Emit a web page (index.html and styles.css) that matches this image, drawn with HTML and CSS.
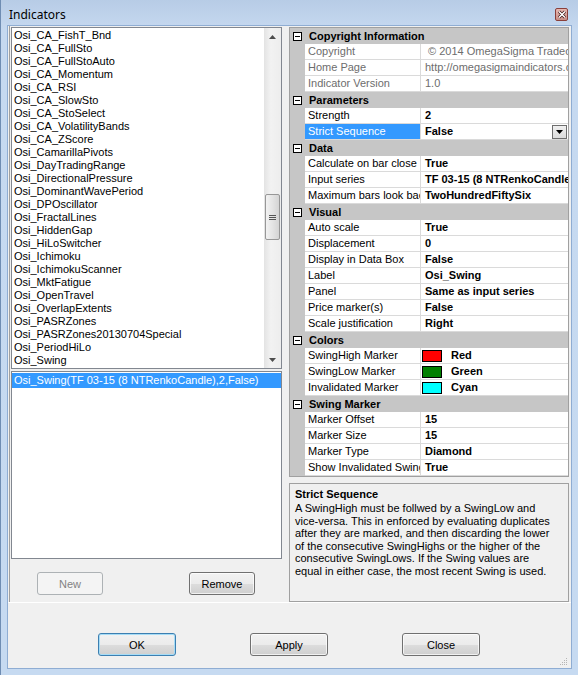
FILE: index.html
```html
<!DOCTYPE html>
<html>
<head>
<meta charset="utf-8">
<link rel="stylesheet" href="styles.css">
</head>
<body>
<div class="window">
  <div class="titlebar">
    <span class="title">Indicators</span>
    <span class="close-btn"><svg width="10" height="9" viewBox="0 0 10 9"><path d="M2 1.5 L8 7.5 M8 1.5 L2 7.5" stroke="#3a1010" stroke-width="3"/><path d="M2 1.5 L8 7.5 M8 1.5 L2 7.5" stroke="#fff" stroke-width="1.6"/></svg></span>
  </div>
  <div class="client">
    <div class="main">
      <div class="left">
        <div class="list list-avail">
          <div class="items">
            <div class="item">Osi_CA_FishT_Bnd</div>
            <div class="item">Osi_CA_FullSto</div>
            <div class="item">Osi_CA_FullStoAuto</div>
            <div class="item">Osi_CA_Momentum</div>
            <div class="item">Osi_CA_RSI</div>
            <div class="item">Osi_CA_SlowSto</div>
            <div class="item">Osi_CA_StoSelect</div>
            <div class="item">Osi_CA_VolatilityBands</div>
            <div class="item">Osi_CA_ZScore</div>
            <div class="item">Osi_CamarillaPivots</div>
            <div class="item">Osi_DayTradingRange</div>
            <div class="item">Osi_DirectionalPressure</div>
            <div class="item">Osi_DominantWavePeriod</div>
            <div class="item">Osi_DPOscillator</div>
            <div class="item">Osi_FractalLines</div>
            <div class="item">Osi_HiddenGap</div>
            <div class="item">Osi_HiLoSwitcher</div>
            <div class="item">Osi_Ichimoku</div>
            <div class="item">Osi_IchimokuScanner</div>
            <div class="item">Osi_MktFatigue</div>
            <div class="item">Osi_OpenTravel</div>
            <div class="item">Osi_OverlapExtents</div>
            <div class="item">Osi_PASRZones</div>
            <div class="item">Osi_PASRZones20130704Special</div>
            <div class="item">Osi_PeriodHiLo</div>
            <div class="item">Osi_Swing</div>
          </div>
          <div class="vscroll">
            <div class="sb-arrow"><svg width="7" height="4" viewBox="0 0 7 4"><path d="M0 4 L3.5 0 L7 4 Z" fill="#4d4d4d"/></svg></div>
            <div class="sb-track">
              <div class="sb-thumb"><svg width="7" height="7" viewBox="0 0 7 7"><path d="M0 1.5 H7 M0 3.5 H7 M0 5.5 H7" stroke="#555" stroke-width="1"/></svg></div>
            </div>
            <div class="sb-arrow"><svg width="7" height="4" viewBox="0 0 7 4"><path d="M0 0 L3.5 4 L7 0 Z" fill="#4d4d4d"/></svg></div>
          </div>
        </div>
        <div class="list list-sel">
          <div class="sel-item">Osi_Swing(TF 03-15 (8 NTRenkoCandle),2,False)</div>
        </div>
        <div class="left-buttons">
          <button class="btn btn-disabled">New</button>
          <button class="btn">Remove</button>
        </div>
      </div>
      <div class="right">
        <div class="grid">
          <div class="cat"><span class="minus"></span><span class="cat-label">Copyright Information</span></div>
          <div class="row ro"><span class="gut"></span><span class="name">Copyright</span><span class="val">&nbsp;© 2014 OmegaSigma Tradecraft</span></div>
          <div class="row ro"><span class="gut"></span><span class="name">Home Page</span><span class="val">http://omegasigmaindicators.com</span></div>
          <div class="row ro"><span class="gut"></span><span class="name">Indicator Version</span><span class="val">1.0</span></div>
          <div class="cat"><span class="minus"></span><span class="cat-label">Parameters</span></div>
          <div class="row"><span class="gut"></span><span class="name">Strength</span><span class="val">2</span></div>
          <div class="row"><span class="gut"></span><span class="name selected">Strict Sequence</span><span class="val">False<span class="dd"><svg width="7" height="4" viewBox="0 0 7 4"><path d="M0 0 L3.5 4 L7 0 Z" fill="#000"/></svg></span></span></div>
          <div class="cat"><span class="minus"></span><span class="cat-label">Data</span></div>
          <div class="row"><span class="gut"></span><span class="name">Calculate on bar close</span><span class="val">True</span></div>
          <div class="row"><span class="gut"></span><span class="name">Input series</span><span class="val">TF 03-15 (8 NTRenkoCandle)</span></div>
          <div class="row"><span class="gut"></span><span class="name">Maximum bars look back</span><span class="val">TwoHundredFiftySix</span></div>
          <div class="cat"><span class="minus"></span><span class="cat-label">Visual</span></div>
          <div class="row"><span class="gut"></span><span class="name">Auto scale</span><span class="val">True</span></div>
          <div class="row"><span class="gut"></span><span class="name">Displacement</span><span class="val">0</span></div>
          <div class="row"><span class="gut"></span><span class="name">Display in Data Box</span><span class="val">False</span></div>
          <div class="row"><span class="gut"></span><span class="name">Label</span><span class="val">Osi_Swing</span></div>
          <div class="row"><span class="gut"></span><span class="name">Panel</span><span class="val">Same as input series</span></div>
          <div class="row"><span class="gut"></span><span class="name">Price marker(s)</span><span class="val">False</span></div>
          <div class="row"><span class="gut"></span><span class="name">Scale justification</span><span class="val">Right</span></div>
          <div class="cat"><span class="minus"></span><span class="cat-label">Colors</span></div>
          <div class="row"><span class="gut"></span><span class="name">SwingHigh Marker</span><span class="val val-color"><span class="swatch sw-red"></span>Red</span></div>
          <div class="row"><span class="gut"></span><span class="name">SwingLow Marker</span><span class="val val-color"><span class="swatch sw-green"></span>Green</span></div>
          <div class="row"><span class="gut"></span><span class="name">Invalidated Marker</span><span class="val val-color"><span class="swatch sw-cyan"></span>Cyan</span></div>
          <div class="cat"><span class="minus"></span><span class="cat-label">Swing Marker</span></div>
          <div class="row"><span class="gut"></span><span class="name">Marker Offset</span><span class="val">15</span></div>
          <div class="row"><span class="gut"></span><span class="name">Marker Size</span><span class="val">15</span></div>
          <div class="row"><span class="gut"></span><span class="name">Marker Type</span><span class="val">Diamond</span></div>
          <div class="row"><span class="gut"></span><span class="name">Show Invalidated Swings</span><span class="val">True</span></div>
        </div>
        <div class="desc">
          <div class="desc-title">Strict Sequence</div>
          <div class="desc-text">A SwingHigh must be follwed by a SwingLow and<br>vice-versa. This in enforced by evaluating duplicates<br>after they are marked, and then discarding the lower<br>of the consecutive SwingHighs or the higher of the<br>consecutive SwingLows. If the Swing values are<br>equal in either case, the most recent Swing is used.</div>
        </div>
      </div>
    </div>
    <div class="bottom">
      <button class="btn btn-main btn-default">OK</button>
      <button class="btn btn-main">Apply</button>
      <button class="btn btn-main">Close</button>
      <span class="grip"><svg width="8" height="8" viewBox="0 0 8 8"><g fill="#b5b5b5"><rect x="6" y="0" width="1" height="1"/><rect x="4" y="2" width="1" height="1"/><rect x="6" y="2" width="1" height="1"/><rect x="2" y="4" width="1" height="1"/><rect x="4" y="4" width="1" height="1"/><rect x="6" y="4" width="1" height="1"/><rect x="0" y="6" width="1" height="1"/><rect x="2" y="6" width="1" height="1"/><rect x="4" y="6" width="1" height="1"/><rect x="6" y="6" width="1" height="1"/></g></svg></span>
    </div>
  </div>
</div>
</body>
</html>
```
FILE: styles.css
```css
* { box-sizing: border-box; }
html, body { margin: 0; padding: 0; }
body {
  width: 578px;
  height: 675px;
  overflow: hidden;
  background: #c4d8ef;
  font-family: "Liberation Sans", Arial, sans-serif;
  font-size: 11px;
  color: #000;
}
.window {
  width: 578px;
  height: 675px;
  display: flex;
  flex-direction: column;
  background: linear-gradient(#b7cce6, #c6d9f0 30px, #c6daf1);
  border-left: 1px solid #6f8db3;
}
.titlebar {
  height: 26px;
  display: flex;
  align-items: flex-start;
  justify-content: space-between;
  padding: 0 10px 0 8px;
}
.title {
  font-family: "Noto Sans", "Open Sans", sans-serif;
  font-size: 12px;
  line-height: 16px;
  color: #000;
  margin-top: 7px;
}
.close-btn {
  width: 13px;
  height: 13px;
  border: 1px solid #8a3f3a;
  border-radius: 2px;
  background: linear-gradient(#e7b7b0, #c98f87);
  display: flex;
  align-items: center;
  justify-content: center;
  margin-top: 8px;
}
.client {
  margin: 0 7px 7px 7px;
  flex: 1;
  background: #f0f0f0;
  display: flex;
  flex-direction: column;
  box-shadow: 0 0 0 1px #8fadd3;
}
.main {
  height: 577px;
  display: flex;
  border-bottom: 1px solid #ffffff;
}
.left {
  width: 280px;
  margin-left: 1px;
  border-left: 1px solid #a0a0a0;
  display: flex;
  flex-direction: column;
  padding: 1px 0 0 1px;
}
.list {
  width: 271px;
  border: 1px solid #828790;
  background: #fff;
}
.list-avail {
  height: 342px;
  display: flex;
}
.items {
  flex: 1;
  padding: 1px 0 0 2px;
}
.item {
  height: 13px;
  line-height: 13px;
  white-space: nowrap;
}
.vscroll {
  width: 17px;
  display: flex;
  flex-direction: column;
  background: linear-gradient(90deg, #e3e3e3, #f2f2f2 40%, #ededed);
}
.sb-arrow {
  height: 17px;
  display: flex;
  align-items: center;
  justify-content: center;
}
.sb-track {
  flex: 1;
}
.sb-thumb {
  margin: 149px 1px 0 1px;
  height: 46px;
  border: 1px solid #979797;
  border-radius: 2px;
  background: linear-gradient(90deg, #f2f2f2, #e4e4e4 50%, #d4d4d4);
  display: flex;
  align-items: center;
  justify-content: center;
}
.list-sel {
  margin-top: 2px;
  height: 188px;
  padding: 1px 0 0 0;
}
.sel-item {
  height: 15px;
  line-height: 14px;
  background: #3399ff;
  color: #fff;
  padding-left: 2px;
  white-space: nowrap;
}
.left-buttons {
  display: flex;
  padding: 13px 0 0 26px;
  gap: 86px;
}
.btn {
  font-family: "Liberation Sans", Arial, sans-serif;
  font-size: 11px;
  color: #000;
  width: 66px;
  height: 23px;
  border: 1px solid #707070;
  border-radius: 3px;
  background: linear-gradient(#f2f2f2, #ebebeb 50%, #dddddd 51%, #cfcfcf);
  padding: 0;
  box-shadow: inset 0 0 0 1px rgba(255,255,255,0.7);
}
.btn-disabled {
  color: #838383;
  border-color: #adb2b5;
  background: #f4f4f4;
  box-shadow: none;
}
.right {
  width: 282px;
  display: flex;
  flex-direction: column;
  padding: 1px 2px 0 0;
}
.grid {
  border: 1px solid #a0a0a0;
  background: #fff;
}
.cat, .row {
  height: 16px;
  display: flex;
  white-space: nowrap;
  overflow: hidden;
}
.cat {
  background: #c6c6c6;
  align-items: center;
  font-weight: bold;
}
.minus {
  width: 9px;
  height: 9px;
  border: 1px solid #000;
  background: #fff;
  margin: 0 8px 0 3px;
  position: relative;
  flex: none;
}
.minus::after {
  content: "";
  position: absolute;
  left: 1px;
  top: 3px;
  width: 5px;
  height: 1px;
  background: #000;
}
.cat-label {
  margin-left: -1px;
}
.gut {
  width: 15px;
  flex: none;
  background: #c6c6c6;
}
.name {
  width: 116px;
  flex: none;
  border-right: 1px solid #dadada;
  border-bottom: 1px solid #dadada;
  padding-left: 3px;
  line-height: 15px;
  overflow: hidden;
  text-overflow: clip;
}
.name.selected {
  background: #3399ff;
  color: #fff;
}
.val {
  flex: 1;
  min-width: 0;
  border-bottom: 1px solid #dadada;
  padding-left: 4px;
  line-height: 15px;
  font-weight: bold;
  overflow: hidden;
  display: flex;
  align-items: center;
}
.ro .name, .ro .val {
  color: #6d6d6d;
  font-weight: normal;
}
.dd {
  margin-left: auto;
  margin-right: 1px;
  width: 15px;
  height: 14px;
  border: 1px solid #6e6e6e;
  background: linear-gradient(#f0f0f0, #dcdcdc);
  display: flex;
  align-items: center;
  justify-content: center;
  flex: none;
}
.val-color {
  padding-left: 1px;
}
.swatch {
  width: 20px;
  height: 12px;
  border: 1px solid #000;
  margin-right: 9px;
  flex: none;
}
.sw-red { background: #ff0000; }
.sw-green { background: #008000; }
.sw-cyan { background: #00ffff; }
.desc {
  margin-top: 6px;
  flex: 1;
  border: 1px solid #a0a0a0;
  background: #f0f0f0;
  padding: 3px 0 0 5px;
}
.desc-title {
  font-weight: bold;
  line-height: 14px;
  margin-bottom: 1px;
}
.desc-text {
  line-height: 12.6px;
  white-space: nowrap;
}
.bottom {
  flex: 1;
  display: flex;
  align-items: flex-start;
  padding: 30px 0 0 90px;
  gap: 74px;
  position: relative;
}
.btn-main {
  width: 78px;
}
.btn-default {
  border-color: #3c7fb1;
  box-shadow: inset 0 0 0 1px #a6dcf6;
}
.grip {
  position: absolute;
  right: 3px;
  bottom: 2px;
  width: 8px;
  height: 8px;
  line-height: 0;
}
```
